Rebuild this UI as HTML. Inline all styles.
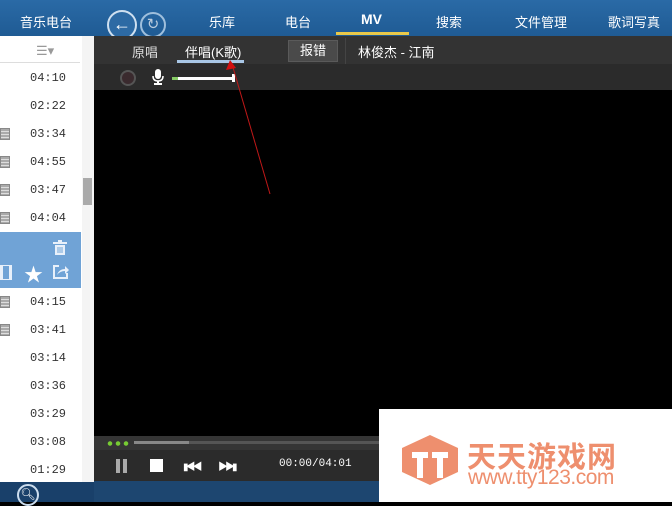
<!DOCTYPE html><html><head><meta charset="utf-8"><style>
*{margin:0;padding:0;box-sizing:border-box}
body{width:672px;height:502px;overflow:hidden;position:relative;background:#000;font-family:"Liberation Sans","Noto Sans CJK SC",sans-serif;font-size:13px}
.a{position:absolute}
.top{left:0;top:0;width:672px;height:36px;background:linear-gradient(#2a6aa6,#1f5b94)}
.nav{color:#fff;font-size:13px;top:12px}
.left{left:0;top:36px;width:94px;height:446px;background:#fff}
.t{left:30px;font-family:"Liberation Mono",monospace;font-size:12px;color:#333}
.film{left:0;width:10px;height:12px;background:repeating-linear-gradient(#aaa 0 2px,#ddd 2px 3px);border:1px solid #888}
</style></head><body>
<div class="a top"></div>
<div class="a nav" style="left:20px">音乐电台</div>
<div class="a" style="left:107px;top:10px;width:30px;height:30px;border:2px solid #cfe0f0;border-radius:50%;background:#2d6aa4;color:#fff;font-size:18px;line-height:25px;text-align:center;font-weight:bold">←</div>
<div class="a" style="left:140px;top:12px;width:26px;height:26px;border:2px solid #9fbfdc;border-radius:50%;color:#bcd;font-size:15px;line-height:21px;text-align:center">↻</div>
<div class="a nav" style="left:209px">乐库</div>
<div class="a nav" style="left:285px">电台</div>
<div class="a nav" style="left:361px;font-weight:bold;font-size:14px;top:11px">MV</div>
<div class="a" style="left:336px;top:32px;width:73px;height:3px;background:#e8c84a"></div>
<div class="a nav" style="left:436px">搜索</div>
<div class="a nav" style="left:515px">文件管理</div>
<div class="a nav" style="left:608px">歌词写真</div>

<div class="a left"></div>
<div class="a" style="left:0;top:62px;width:80px;height:1px;background:#ddd"></div>
<div class="a" style="left:36px;top:43px;color:#999;font-size:13px">☰▾</div>
<div class="a" style="left:82px;top:36px;width:12px;height:446px;background:#f4f4f4"></div>
<div class="a" style="left:83px;top:178px;width:9px;height:27px;background:#aaa"></div>
<div class="a t" style="top:71px">04:10</div>
<div class="a t" style="top:99px">02:22</div>
<div class="a t" style="top:127px">03:34</div><div class="a film" style="top:128px"></div>
<div class="a t" style="top:155px">04:55</div><div class="a film" style="top:156px"></div>
<div class="a t" style="top:183px">03:47</div><div class="a film" style="top:184px"></div>
<div class="a t" style="top:211px">04:04</div><div class="a film" style="top:212px"></div>
<div class="a" style="left:0;top:232px;width:81px;height:56px;background:#70a3d6"></div>
<svg class="a" style="left:52px;top:240px" width="16" height="16"><rect x="1" y="2" width="14" height="2" fill="#e8f0fa"/><rect x="6" y="0" width="4" height="2" fill="#e8f0fa"/><path d="M3,5 h10 v10 h-10z" fill="#e8f0fa"/><path d="M6,7 v6 M8,7 v6 M10,7 v6" stroke="#70a3d6" stroke-width="1"/></svg>
<svg class="a" style="left:0;top:265px" width="12" height="15"><rect width="12" height="15" fill="#e8f0fa"/><rect x="3" y="1" width="6" height="13" fill="#70a3d6"/></svg>
<div class="a" style="left:24px;top:260px;color:#fff;font-size:19px">★</div>
<svg class="a" style="left:53px;top:264px" width="16" height="15"><path d="M6,2 H1 V14 H14 V9" stroke="#e8f0fa" stroke-width="2" fill="none"/><path d="M4,11 Q6,5 12,5 V2 L16,6 L12,10 V7 Q7,7 4,11z" fill="#e8f0fa"/></svg>
<div class="a t" style="top:295px">04:15</div><div class="a film" style="top:296px"></div>
<div class="a t" style="top:323px">03:41</div><div class="a film" style="top:324px"></div>
<div class="a t" style="top:351px">03:14</div>
<div class="a t" style="top:379px">03:36</div>
<div class="a t" style="top:407px">03:29</div>
<div class="a t" style="top:435px">03:08</div>
<div class="a t" style="top:463px">01:29</div>
<div class="a" style="left:0;top:482px;width:94px;height:20px;background:#19406a"></div>
<div class="a" style="left:17px;top:484px;width:22px;height:22px;border:2px solid #cde;border-radius:50%;color:#fff;font-size:12px;text-align:center;line-height:17px">🔍︎</div>

<div class="a" style="left:94px;top:36px;width:578px;height:28px;background:#333"></div>
<div class="a" style="left:132px;top:42px;color:#ddd">原唱</div>
<div class="a" style="left:185px;top:42px;color:#fff">伴唱(K歌)</div>
<div class="a" style="left:177px;top:60px;width:67px;height:3px;background:#a9c7e6"></div>
<div class="a" style="left:288px;top:40px;width:50px;height:22px;background:#4a4a4a;border:1px solid #5a5a5a;color:#fff;text-align:center;line-height:20px">报错</div>
<div class="a" style="left:345px;top:38px;width:1px;height:26px;background:#444"></div>
<div class="a" style="left:358px;top:42px;color:#fff">林俊杰 - 江南</div>
<div class="a" style="left:94px;top:64px;width:578px;height:26px;background:#2b2b2b"></div>
<div class="a" style="left:120px;top:70px;width:16px;height:16px;border-radius:50%;border:2px solid #555;background:#3a2a2e"></div>
<svg class="a" style="left:152px;top:69px" width="12" height="16"><rect x="3" y="0" width="6" height="10" rx="3" fill="#fff"/><path d="M1,7 Q1,12 6,12 Q11,12 11,7" stroke="#fff" fill="none" stroke-width="1.5"/><rect x="5" y="12" width="2" height="2" fill="#fff"/><rect x="2" y="14" width="8" height="2" fill="#fff"/></svg>
<div class="a" style="left:172px;top:77px;width:62px;height:3px;background:#fff"></div>
<div class="a" style="left:172px;top:77px;width:6px;height:3px;background:#8c6"></div>
<div class="a" style="left:232px;top:74px;width:3px;height:8px;background:#fff"></div>
<svg class="a" style="left:0;top:0" width="672" height="502"><line x1="270" y1="194" x2="232" y2="64" stroke="#c01818" stroke-width="1"/><polygon points="230,60 226,70 236,68" fill="#d01010"/></svg>

<div class="a" style="left:94px;top:436px;width:578px;height:14px;background:#353535"></div>
<div class="a" style="left:106px;top:441px;width:24px;height:5px;background:radial-gradient(circle,#7c3 2px,transparent 2.5px) 0 0/8px 5px"></div>
<div class="a" style="left:134px;top:441px;width:250px;height:3px;background:#555"></div>
<div class="a" style="left:134px;top:441px;width:55px;height:3px;background:#888"></div>
<div class="a" style="left:94px;top:450px;width:578px;height:31px;background:#2b2b2b"></div>
<div class="a" style="left:116px;top:459px;width:4px;height:14px;background:#aaa"></div>
<div class="a" style="left:123px;top:459px;width:4px;height:14px;background:#aaa"></div>
<div class="a" style="left:150px;top:459px;width:13px;height:13px;background:#fff"></div>
<div class="a" style="left:183px;top:458px;color:#fff;font-size:10px;letter-spacing:-3px">▮◀◀</div>
<div class="a" style="left:218px;top:458px;color:#fff;font-size:10px;letter-spacing:-3px">▶▶▮</div>
<div class="a" style="left:279px;top:458px;color:#fff;font-family:'Liberation Mono',monospace;font-size:11px">00:00/04:01</div>
<div class="a" style="left:94px;top:481px;width:578px;height:21px;background:#1d4670"></div>

<div class="a" style="left:379px;top:409px;width:293px;height:93px;background:#fff"></div>
<svg class="a" style="left:400px;top:434px" width="60" height="52"><polygon points="30,1 58,14 58,38 30,51 2,38 2,14" fill="#ee8f6e"/><path d="M12,18 h16 v6 h-5 v20 h-6 v-20 h-5z M32,18 h16 v6 h-5 v20 h-6 v-20 h-5z" fill="#fff"/></svg>
<div class="a" style="left:467px;top:434px;color:#ee8f6e;font-size:29px;font-weight:bold;letter-spacing:1px;white-space:nowrap">天天游戏网</div>
<div class="a" style="left:468px;top:466px;color:#ee8f6e;font-size:21px;letter-spacing:-0.5px;white-space:nowrap">www.tty123.com</div>
</body></html>
